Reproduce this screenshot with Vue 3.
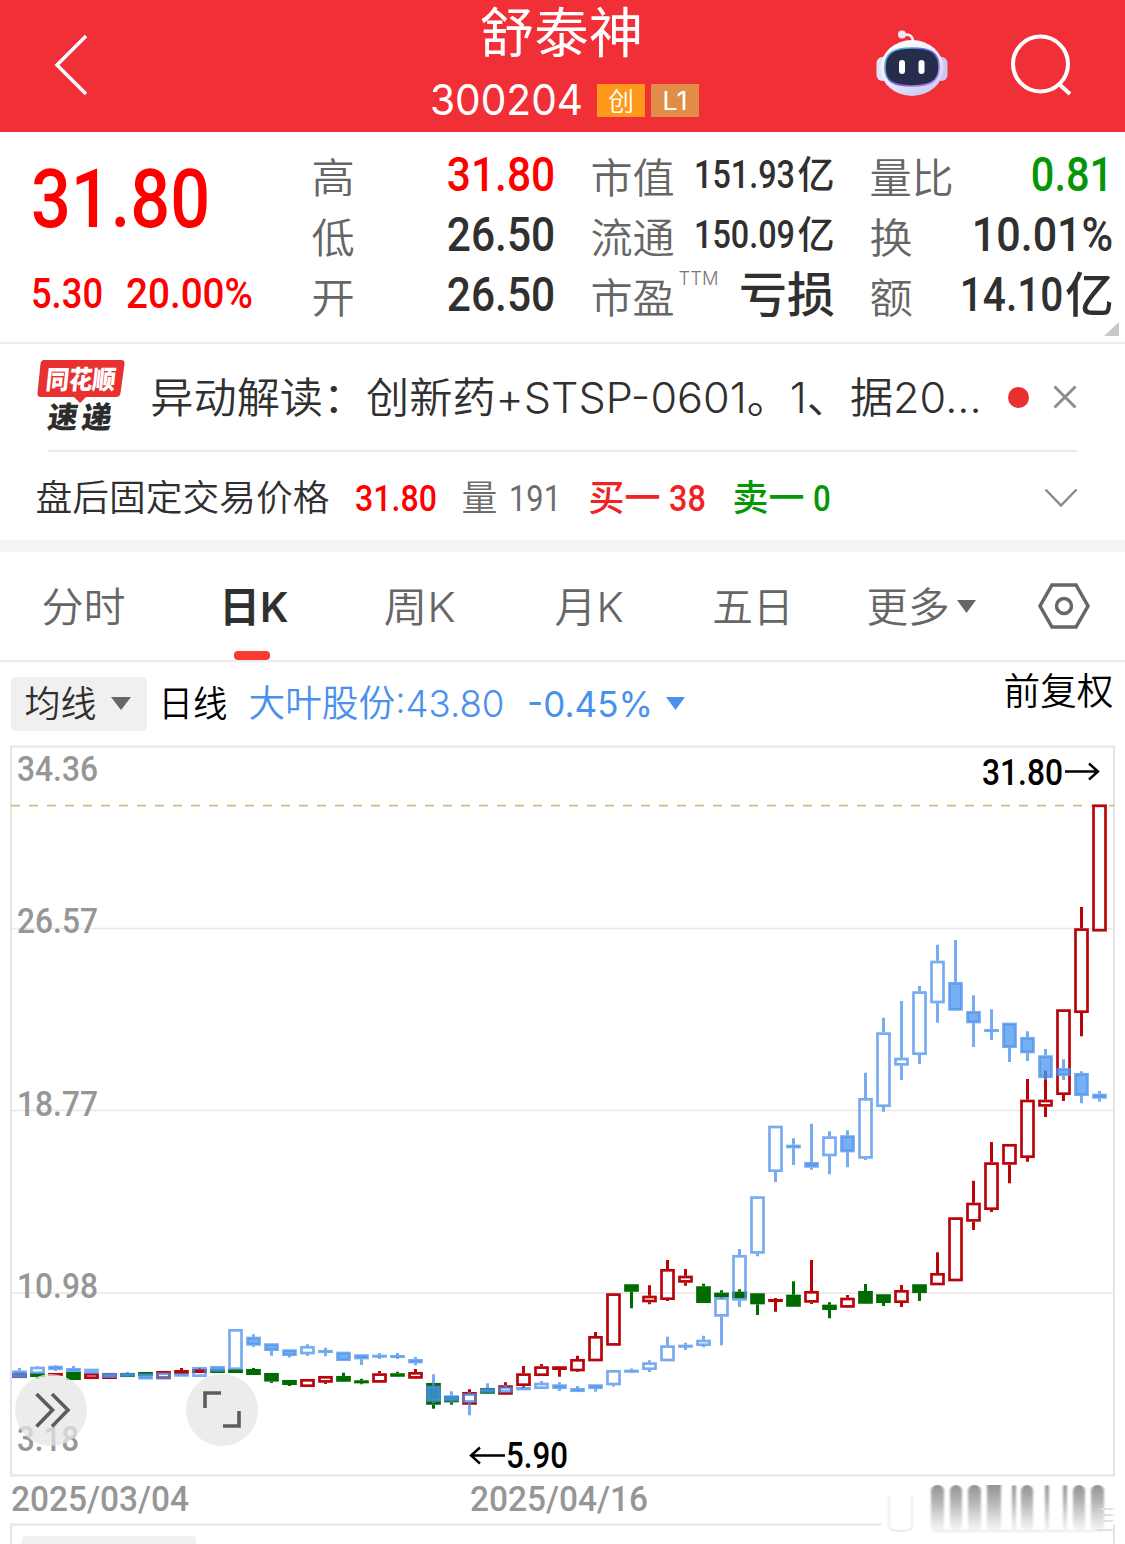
<template>
  <div class="page">
    <header class="top">
      <svg class="back" width="36" height="64" viewBox="0 0 36 64"><path d="M33 3 4 32l29 29" /></svg>
      <div class="title">
        <Fit class="cjk title__name" t="舒泰神" :w="159" :s="54" />
        <div class="title__sub">
          <Fit class="latin" t="300204" :w="151" :s="42" />
          <span class="badge badge--gem"><Fit class="cjk" t="创" :w="24" :s="26" /></span>
          <span class="badge"><Fit class="latin" t="L1" :w="24" :s="26" /></span>
        </div>
      </div>
      <svg class="robot" width="72" height="68" viewBox="0 0 72 68">
        <defs>
          <linearGradient id="shell" x1="0" y1="0" x2="0.6" y2="1">
            <stop offset="0" stop-color="#fff" />
            <stop offset="0.6" stop-color="#eeeafc" />
            <stop offset="1" stop-color="#c9cff5" />
          </linearGradient>
          <linearGradient id="visor-edge" x1="0" y1="0" x2="1" y2="1">
            <stop offset="0" stop-color="#58d8e0" />
            <stop offset="0.45" stop-color="#5a60d0" />
            <stop offset="1" stop-color="#c77df0" />
          </linearGradient>
        </defs>
        <path d="M27 6q10-2 10 7" fill="none" stroke="#f3eefc" stroke-width="2.6" />
        <circle cx="26" cy="5.5" r="4" fill="#efe6f6" />
        <rect x="0.5" y="28" width="12" height="24" rx="6" fill="#e4e2f8" />
        <rect x="59.5" y="28" width="12" height="24" rx="6" fill="#c9c6f0" />
        <ellipse cx="36" cy="39" rx="31.5" ry="28" fill="url(#shell)" />
        <path d="M36 19c19 0 27 5 27 19s-8 19-27 19S9 52 9 38s8-19 27-19" fill="#252d4b" stroke="url(#visor-edge)" stroke-width="1.6" />
        <rect x="23" y="31" width="6" height="14" rx="3" fill="#fff" />
        <rect x="42.500" y="31" width="6" height="14" rx="3" fill="#fff" />
      </svg>
      <svg class="search" width="64" height="64" viewBox="0 0 64 64">
        <circle cx="30.500" cy="30" r="27.500" />
        <path d="m49 50 11 10" />
      </svg>
    </header>

    <section class="quote">
      <div class="quote__main">
        <Fit class="num" t="31.80" :w="175" :s="82" />
        <div class="quote__change">
          <Fit class="num" t="5.30" :w="70" :s="42" />
          <Fit class="num" t="20.00%" :w="125" :s="42" />
        </div>
      </div>
      <div v-for="col in stats" class="stats">
        <div v-for="row in col" class="stats__row">
          <Fit class="cjk stats__label" :t="row.label" :w="row.label.length * 41 - 1" :s="41" />
          <sup v-if="row.sup" class="stats__sup"><Fit class="latin" :t="row.sup" :w="39" :s="18" /></sup>
          <span class="stats__value" :class="row.cls">
            <Fit v-if="row.num" class="num" :t="row.num" :w="row.w" :s="row.s" />
            <Fit v-if="row.unit" class="cjk cjk--medium" :t="row.unit" :w="row.uw" :s="row.us" />
          </span>
        </div>
      </div>
      <svg class="quote__corner" width="15" height="14"><path d="M15 0v14H0z" /></svg>
    </section>

    <section class="news">
      <svg class="news__logo" width="88" height="74" viewBox="0 0 88 74">
        <path d="M7 0h77q4 0 3.500 4l-4 29q-.5 4-4.500 4H49l-6 6-6-6H4q-4 0-3.500-4l3-29Q4 0 7 0" fill="#e83030" />
        <text x="9" y="29" textLength="70" lengthAdjust="spacingAndGlyphs" transform="skewX(-6) translate(2 0)" fill="#fff" font-size="26">同花顺</text>
        <text x="14" y="68" textLength="30" lengthAdjust="spacingAndGlyphs" transform="skewX(-8) translate(5 0)" fill="#2c2c2c" font-size="30">速</text>
        <text x="48" y="68" textLength="30" lengthAdjust="spacingAndGlyphs" transform="skewX(-8) translate(5 0)" fill="#2c2c2c" font-size="30">递</text>
      </svg>
      <Fit class="cjk news__text" t="异动解读：创新药+STSP-0601。1、据20..." :w="828" :s="42" />
      <i class="news__dot"></i>
      <svg class="news__close" width="24" height="24"><path d="m1.500 1.500 21 21m0-21-21 21" /></svg>
    </section>

    <section class="after">
      <Fit class="cjk after__title" t="盘后固定交易价格" :w="291" :s="36" />
      <Fit class="num red" t="31.80" :w="80" :s="36" />
      <Fit class="cjk grey after__vol" t="量" :w="33" :s="36" />
      <Fit class="num num--regular grey" t="191" :w="50" :s="36" />
      <Fit class="cjk cjk--medium crimson after__buy" t="买一" :w="69" :s="36" />
      <Fit class="num crimson" t="38" :w="35" :s="36" />
      <Fit class="cjk cjk--medium green after__sell" t="卖一" :w="69" :s="36" />
      <Fit class="num green" t="0" :w="16" :s="36" />
      <svg class="after__more" width="34" height="20"><path d="m1.500 1.500 15.500 16 15.500-16" /></svg>
    </section>

    <nav class="tabs">
      <span v-for="tab in tabs" class="tabs__item" :class="{ 'tabs__item--active': tab.active }">
        <Fit class="cjk" :t="tab.name" :w="tab.w" :s="41" />
      </span>
      <svg class="tabs__arrow" width="19" height="13"><path d="M0 0h19L9.500 13z" /></svg>
      <svg class="tabs__gear" width="52" height="46" viewBox="0 0 52 46">
        <path d="M14 2h24l12 21-12 21H14L2 23z" />
        <circle cx="26" cy="23" r="7.500" />
      </svg>
    </nav>

    <div class="tools">
      <button class="tools__ma">
        <Fit class="cjk" t="均线" :w="69" :s="36" />
        <svg width="20" height="13"><path d="M0 0h20L10 13z" /></svg>
      </button>
      <Fit class="cjk tools__period" t="日线" :w="66" :s="36" />
      <span class="tools__compare">
        <Fit class="cjk" t="大叶股份:43.80" :w="253" :s="37" />
        <Fit class="latin" t="-0.45%" :w="124" :s="36" />
        <svg width="19" height="13"><path d="M0 0h19L9.500 13z" /></svg>
      </span>
      <Fit class="cjk tools__adjust" t="前复权" :w="107" :s="37" />
    </div>

    <svg class="chart" width="1125" height="799" viewBox="0 745 1125 799">
      <defs>
        <linearGradient id="smear" x1="0" y1="0" x2="0" y2="1">
          <stop offset="0" stop-color="#949494" />
          <stop offset="0.35" stop-color="#b4b4b4" />
          <stop offset="0.7" stop-color="#dcdcdc" />
          <stop offset="1" stop-color="#f8f8f8" />
        </linearGradient>
        <filter id="soft"><feGaussianBlur stdDeviation="1.300 0.500" /></filter>
      </defs>
      <path class="chart__grid" d="M11 928.500h1103M11 1110.500h1103M11 1293h1103" />
      <path class="chart__frame" d="M11 746.500h1103v729H11zM11 1544v-19.500h870M1114 1524v20" />
      <rect x="22" y="1536" width="174" height="12" rx="4" fill="#f0f0f0" />
      <path class="chart__last" d="M11 805.700h1103" />

      <g v-for="c in main" :class="c.kind">
        <path class="wick" :d="c.wick" />
        <rect :x="c.x - 6" :y="c.top + 1.300" width="12" :height="c.h" />
      </g>
      <g v-for="c in compare" :class="c.kind">
        <path class="wick" :d="c.wick" />
        <rect :x="c.x - 6" :y="c.top + 1.300" width="12" :height="c.h" />
      </g>

      <g class="num axis">
        <text v-for="a in axis" :x="a.x" :y="a.y" :textLength="a.w" lengthAdjust="spacingAndGlyphs">{{ a.t }}</text>
      </g>
      <g class="num marks">
        <text x="982" y="784.500" textLength="81" lengthAdjust="spacingAndGlyphs">31.80</text>
        <text x="506" y="1468" textLength="62" lengthAdjust="spacingAndGlyphs">5.90</text>
        <path d="M1065 771.500h33m-9-8 9 8-9 8M505 1455.500h-34m9-8-9 8 9 8" />
      </g>

      <g filter="url(#soft)">
        <rect v-for="b in smears" :x="b[0]" y="1485" :width="b[1]" height="47" :rx="b[2]" fill="url(#smear)" />
        <path d="M934 1531h168" stroke="#f2f2f2" stroke-width="3" />
        <path d="M889 1496v30q0 5 11.500 5t11.500-5v-30" fill="none" stroke="#e6e6e6" stroke-width="1.500" />
        <path d="M1100 1509h13M1100 1515h13M1100 1521h13M1096 1530h17" stroke="#e0e0e0" stroke-width="2" />
      </g>

      <g class="float">
        <circle cx="51" cy="1410" r="36" />
        <circle cx="222" cy="1410" r="36" />
        <path d="m36.500 1394 16 16-16 16.500M52 1394l16 16-16 16.500M205 1408v-15h16M239 1411v15h-16" />
      </g>
    </svg>
  </div>
</template>

<script setup>
import { h } from 'vue'

// one line of text stretched to a given width
const Fit = ({ t, w, s }) => {
  const ascii = /^[\x00-\x7f]+$/.test(t)
  const pad = s * (ascii ? 0.025 : 0.04)
  return h('svg', { width: w, height: s }, [
    h('text', {
      x: -pad,
      y: s * (ascii ? 0.855 : 0.87),
      'font-size': s,
      textLength: w + pad * 2,
      lengthAdjust: 'spacingAndGlyphs'
    }, t)
  ])
}
Fit.props = ['t', 'w', 's']

const stats = [
  [
    { label: '高', num: '31.80', w: 106, s: 48, cls: 'red' },
    { label: '低', num: '26.50', w: 106, s: 48 },
    { label: '开', num: '26.50', w: 106, s: 48 }
  ],
  [
    { label: '市值', num: '151.93', w: 99, s: 38, unit: '亿', uw: 34, us: 38 },
    { label: '流通', num: '150.09', w: 99, s: 38, unit: '亿', uw: 34, us: 38 },
    { label: '市盈', sup: 'TTM', unit: '亏损', uw: 92, us: 48 }
  ],
  [
    { label: '量比', num: '0.81', w: 80, s: 48, cls: 'green' },
    { label: '换', num: '10.01%', w: 139, s: 48 },
    { label: '额', num: '14.10', w: 101, s: 48, unit: '亿', uw: 45, us: 48 }
  ]
]

const tabs = [
  { name: '分时', w: 81 },
  { name: '日K', w: 66, active: true },
  { name: '周K', w: 69 },
  { name: '月K', w: 66 },
  { name: '五日', w: 78 },
  { name: '更多', w: 80 }
]

const axis = [
  { t: '34.36', x: 17, y: 781, w: 81 },
  { t: '26.57', x: 17, y: 933, w: 81 },
  { t: '18.77', x: 17, y: 1116, w: 81 },
  { t: '10.98', x: 17, y: 1298, w: 81 },
  { t: '3.18', x: 17, y: 1451, w: 62 },
  { t: '2025/03/04', x: 11, y: 1511, w: 178 },
  { t: '2025/04/16', x: 470, y: 1511, w: 178 }
]

const smears = [
  [931, 13, 6], [950, 12, 6], [968, 13, 6], [987, 14, 0], [1012, 4, 2],
  [1021, 12, 6], [1045, 4, 2], [1063, 4, 2], [1073, 12, 6], [1091, 13, 6]
]

// kind, high, body top, body bottom, low
const mainData = [
  ['r', 1373, 1373, 1378, 1378], ['g', 1373, 1373, 1377, 1379], ['r', 1373, 1373, 1376, 1376],
  ['g', 1372, 1372, 1380, 1380], ['r', 1373, 1373, 1379, 1379], ['r', 1373, 1373, 1379, 1379],
  ['g', 1373, 1373, 1377, 1377], ['g', 1372, 1372, 1376, 1376], ['r', 1371, 1371, 1379, 1379],
  ['r', 1368, 1370, 1374, 1374], ['r', 1368, 1369, 1373, 1373], ['g', 1369, 1369, 1373, 1373],
  ['g', 1369, 1369, 1373, 1373], ['g', 1368, 1369, 1375, 1375], ['g', 1373, 1373, 1381.5, 1383],
  ['g', 1380, 1380, 1385, 1386], ['r', 1379, 1379, 1387, 1387], ['r', 1376, 1376, 1382.7, 1384],
  ['g', 1372.7, 1376, 1381.7, 1382], ['g', 1378.7, 1380.3, 1383.3, 1384.3], ['r', 1371, 1373.3, 1382.7, 1383],
  ['g', 1371.7, 1373.3, 1376.7, 1377], ['r', 1369, 1372, 1378.7, 1379], ['g', 1383, 1383, 1404.7, 1408.7],
  ['g', 1396, 1396, 1402.3, 1404.7], ['r', 1389.3, 1392, 1404.7, 1405], ['g', 1388, 1388, 1393.7, 1394],
  ['r', 1382.3, 1385.3, 1394.7, 1395], ['r', 1366, 1373.3, 1386, 1388], ['r', 1364, 1366.3, 1376, 1376],
  ['r', 1366.3, 1366.3, 1370, 1376.7], ['r', 1355.7, 1359, 1371.3, 1372], ['r', 1332, 1336, 1361.3, 1361.3],
  ['r', 1293.3, 1293.3, 1345.7, 1345.7], ['g', 1284.3, 1284.3, 1291.7, 1308.3], ['r', 1285.3, 1295.7, 1302.3, 1304.3],
  ['r', 1260, 1269, 1300, 1301], ['r', 1269, 1275.7, 1282.7, 1285.7], ['g', 1283.7, 1286.3, 1303, 1303],
  ['g', 1290.3, 1292.7, 1297.3, 1298.3], ['g', 1289.3, 1291.7, 1298.3, 1298.3], ['g', 1293.3, 1293.3, 1304.3, 1315],
  ['r', 1298, 1299, 1302, 1311.7], ['g', 1281.3, 1294.7, 1306.7, 1306.7], ['r', 1260, 1291, 1302.7, 1304],
  ['g', 1302.3, 1304.7, 1310, 1318.3], ['r', 1295, 1297.7, 1307.7, 1308], ['g', 1284, 1291, 1303.7, 1304],
  ['g', 1294.3, 1294.3, 1303, 1306], ['r', 1285, 1290, 1303, 1307], ['g', 1284.3, 1284.3, 1293, 1301],
  ['r', 1252.3, 1273, 1285.3, 1285.3], ['r', 1217.3, 1217.3, 1281.3, 1281.3], ['r', 1180.7, 1202.7, 1221.7, 1230],
  ['r', 1142, 1162.3, 1210, 1212], ['r', 1144, 1144, 1164.7, 1183.3], ['r', 1079, 1099.7, 1158, 1161.7],
  ['r', 1070.7, 1099.7, 1106.7, 1117], ['r', 1009.3, 1009.3, 1095, 1101], ['r', 907, 928.3, 1013, 1036.3],
  ['r', 804.5, 804.5, 931.5, 931.5]
]

// s = solid, o = hollow
const compareData = [
  ['s', 1368, 1370.5, 1378, 1378], ['o', 1366, 1366.7, 1374, 1374], ['s', 1365, 1365.7, 1370, 1371],
  ['s', 1366, 1368, 1372, 1372], ['o', 1368.7, 1368.7, 1374, 1374], ['s', 1373, 1373, 1378, 1378],
  ['s', 1372, 1373, 1376.7, 1377], ['s', 1373.5, 1373.5, 1379.5, 1379.5], ['o', 1372.5, 1372.5, 1379.5, 1379.5],
  ['s', 1373.3, 1373.3, 1376.7, 1376.7], ['o', 1367, 1367, 1377, 1377], ['s', 1366, 1366, 1371.7, 1372],
  ['o', 1329, 1329, 1370, 1370], ['s', 1334.3, 1336.7, 1345.7, 1347], ['s', 1343.3, 1343.3, 1351, 1355.7],
  ['s', 1349.3, 1349.3, 1356, 1357.5], ['o', 1344.3, 1346, 1354.3, 1356], ['s', 1347.7, 1350, 1353, 1356.3],
  ['s', 1351.7, 1351.7, 1361, 1361], ['s', 1354.3, 1354.3, 1359.3, 1365], ['s', 1353, 1354.7, 1357.3, 1359],
  ['s', 1353, 1355, 1357.3, 1359], ['s', 1357, 1359, 1363.3, 1365.3], ['s', 1374.3, 1385.7, 1401.7, 1403],
  ['s', 1391.3, 1395.3, 1401.3, 1402], ['o', 1392, 1393.3, 1402.7, 1415.3], ['s', 1383.3, 1388.3, 1392.7, 1393],
  ['o', 1385, 1386.7, 1392.7, 1393], ['s', 1386, 1387, 1390.3, 1390.3], ['o', 1381, 1382.7, 1389, 1389],
  ['s', 1382.3, 1384.3, 1389, 1391], ['s', 1386, 1388, 1392, 1392], ['s', 1384.3, 1384.3, 1389, 1391.7],
  ['o', 1370, 1370, 1385.3, 1386.7], ['s', 1368.5, 1369.7, 1372.7, 1373], ['o', 1360.3, 1362.3, 1370, 1372],
  ['o', 1336.7, 1345.3, 1361.3, 1361.3], ['s', 1342.7, 1344.7, 1347.5, 1350], ['o', 1335.7, 1339.7, 1346, 1347.3],
  ['o', 1297.3, 1297.3, 1316.7, 1345.3], ['o', 1249, 1255, 1300.7, 1307], ['o', 1196.3, 1196.3, 1253.7, 1256.3],
  ['o', 1125.7, 1125.7, 1172, 1182], ['s', 1138.3, 1144.7, 1148.3, 1165], ['s', 1123.7, 1162, 1167.7, 1169.7],
  ['o', 1131.3, 1136.3, 1156.3, 1174.3], ['s', 1130.3, 1135.3, 1152.3, 1167.3], ['o', 1072.7, 1098, 1158.7, 1160],
  ['o', 1017.7, 1032.3, 1107, 1111.7], ['o', 1001, 1057.7, 1065.7, 1080], ['o', 986, 991.3, 1055, 1064],
  ['o', 944.7, 960.7, 1003.3, 1022.7], ['s', 940, 982, 1010.7, 1011], ['s', 995.3, 1011, 1023.3, 1047],
  ['s', 1009.3, 1029, 1031.7, 1040], ['s', 1022.7, 1022.7, 1048, 1062], ['s', 1031.3, 1037, 1053.3, 1061],
  ['s', 1049, 1055.3, 1078, 1080], ['s', 1059.3, 1068, 1076, 1080], ['s', 1071.3, 1073, 1096, 1103.3],
  ['s', 1091, 1093.7, 1098.7, 1101.7]
]

const STEP = 18
const toCandles = rows => rows.map(([kind, high, top, bottom, low], i) => {
  const x = 19.5 + i * STEP
  return {
    kind,
    x,
    top,
    h: Math.max(bottom - top - 2.6, 0.4),
    wick: `M${x} ${high}V${top}M${x} ${bottom}V${low}`
  }
})
const main = toCandles(mainData)
const compare = toCandles(compareData)
</script>

<style>
body {
  background: #fff;
}
</style>

<style scoped>
.page {
  width: 1125px;
  height: 1544px;
  overflow: hidden;
  background: #fff;
  color: #303030;
}
svg {
  display: block;
  flex: none;
  overflow: visible;
  fill: currentColor;
}
.num {
  font-family: Roboto, "Liberation Sans", sans-serif;
  font-weight: 500;
}
.num--regular {
  font-weight: 400;
}
.latin {
  font-family: Inter, "Liberation Sans", sans-serif;
}
.cjk {
  font-family: Inter, "Noto Sans CJK SC", sans-serif;
  font-weight: 350;
}
.cjk--medium {
  font-weight: 500;
}
.red {
  color: #fe0000;
}
.crimson {
  color: #f02323;
}
.green {
  color: #059605;
}
.grey {
  color: #6c6c6c;
}

.top {
  display: flex;
  height: 132px;
  background: #f12f37;
  color: #fff;
}
.back {
  margin: 33px 0 0 53px;
  fill: none;
  stroke: #fff;
  stroke-width: 3.5;
}
.title {
  width: 272px;
  margin-left: 341px;
}
.title__name {
  margin: 6px 0 0 52px;
  font-weight: 400;
}
.title__sub {
  display: flex;
  align-items: center;
  height: 42px;
  margin-top: 19px;
  padding-left: 1px;
}
.badge {
  display: flex;
  align-items: center;
  justify-content: center;
  width: 48px;
  height: 33px;
  margin: 1px 0 0 6px;
  background: #e18d48;
}
.badge--gem {
  margin-left: 15px;
  background: #ff991b;
}
.robot {
  margin: 29px 0 0 174px;
}
.search {
  margin: 34px 0 0 62px;
  fill: none;
  stroke: #fff;
  stroke-width: 4;
}

.quote {
  position: relative;
  display: flex;
  box-sizing: border-box;
  height: 212px;
  padding-top: 12px;
  border-bottom: 2px solid #ebebeb;
}
.quote__main {
  width: 281px;
  padding: 13px 0 0 32px;
  color: #fe0000;
}
.quote__main > .num {
  margin-left: 1px;
}
.quote__change {
  display: flex;
  gap: 25px;
  margin-top: 33px;
}
.stats {
  width: 241px;
  margin-right: 38px;
}
.stats:nth-of-type(4) {
  margin-right: 0;
}
.stats__row {
  display: flex;
  align-items: center;
  height: 60px;
}
.stats__label {
  color: #666;
  margin-top: 6px;
}
.stats__sup {
  color: #777;
  margin: -30px 0 0 6px;
  font-weight: 300;
}
.stats__value {
  display: flex;
  align-items: center;
  gap: 5px;
  margin-left: auto;
}
.quote__corner {
  position: absolute;
  right: 6px;
  bottom: 6px;
  fill: #c8c8c8;
}

.news {
  display: flex;
  align-items: center;
  height: 106px;
  padding-left: 37px;
  position: relative;
}
.news::after {
  content: "";
  position: absolute;
  left: 48px;
  right: 48px;
  bottom: -2px;
  height: 2px;
  background: #ebebeb;
}
.news__logo {
  font-family: "Noto Sans CJK SC", sans-serif;
  font-weight: 900;
}
.news__text {
  margin-left: 27px;
}
.news__dot {
  width: 21px;
  height: 21px;
  margin-left: 28px;
  border-radius: 50%;
  background: #e93030;
}
.news__close {
  margin-left: 24px;
  fill: none;
  stroke: #8c8c8c;
  stroke-width: 3;
}

.after {
  display: flex;
  align-items: center;
  box-sizing: border-box;
  height: 102px;
  padding: 5px 0 0 37px;
  border-bottom: 12px solid #f4f4f4;
}
.after__title {
  margin-right: 28px;
}
.after__vol {
  margin: 0 14px 0 27px;
}
.after__buy {
  margin: 0 11px 0 30px;
}
.after__sell {
  margin: 0 11px 0 29px;
}
.after__more {
  margin-left: 214px;
  fill: none;
  stroke: #8a8a8a;
  stroke-width: 2.5;
}

.tabs {
  display: flex;
  align-items: center;
  box-sizing: border-box;
  height: 110px;
  padding-left: 43px;
  border-bottom: 2px solid #ebebeb;
  color: #666;
}
.tabs__item {
  position: relative;
  margin-right: 97px;
}
.tabs__item:nth-child(2) {
  margin-right: 98px;
}
.tabs__item:nth-child(3) {
  margin-right: 102px;
}
.tabs__item:nth-child(4) {
  margin-right: 92px;
}
.tabs__item:nth-child(5) {
  margin-right: 76px;
}
.tabs__item:nth-child(6) {
  margin-right: 9px;
}
.tabs__item--active {
  color: #303030;
}
.tabs__item--active .cjk {
  font-weight: 600;
}
.tabs__item--active::after {
  content: "";
  position: absolute;
  left: 13px;
  bottom: -33px;
  width: 36px;
  height: 9px;
  border-radius: 4px;
  background: #fb3a32;
}
.tabs__gear {
  margin-left: 62px;
  fill: none;
  stroke: #666;
  stroke-width: 3.5;
}

.tools {
  display: flex;
  align-items: center;
  height: 83px;
  padding-left: 11px;
  color: #000;
}
.tools__ma {
  display: flex;
  align-items: center;
  width: 136px;
  height: 54px;
  padding: 0 0 0 15px;
  gap: 16px;
  border: 0;
  border-radius: 5px;
  background: #f0f0f0;
  color: #303030;
}
.tools__ma > svg:last-child {
  color: #666;
}
.tools__period {
  margin-left: 13px;
}
.tools__compare {
  display: flex;
  align-items: center;
  gap: 25px;
  margin-left: 24px;
  color: #4a90ec;
}
.tools__compare > svg:last-child {
  margin-left: -11px;
}
.tools__adjust {
  margin: -25px 13px 0 auto;
}

.chart {
  overflow: hidden;
}
.chart__grid {
  stroke: #e8e8e8;
  stroke-width: 1.5;
}
.chart__frame {
  fill: none;
  stroke: #e4e4e4;
  stroke-width: 2;
}
.chart__last {
  stroke: #d8b880;
  stroke-width: 1.7;
  stroke-dasharray: 9 9;
}
.r,
.o {
  fill: none;
  stroke-width: 2.7;
}
.r {
  stroke: #b9040a;
}
.g {
  fill: #006b00;
  stroke: #006b00;
  stroke-width: 2.7;
}
.o {
  stroke: rgba(74, 144, 236, 0.75);
}
.s {
  fill: rgba(74, 148, 242, 0.75);
  stroke: rgba(74, 144, 236, 0.75);
  stroke-width: 2.7;
}
.wick {
  stroke-width: 3;
}
.axis {
  fill: #969696;
  font-size: 35px;
}
.marks {
  fill: #000;
  font-size: 36px;
}
.marks path {
  fill: none;
  stroke: #000;
  stroke-width: 2.4;
}
.float circle {
  fill: rgba(229, 229, 229, 0.75);
}
.float path {
  fill: none;
  stroke: #5c5c5c;
  stroke-width: 3.6;
}
</style>
